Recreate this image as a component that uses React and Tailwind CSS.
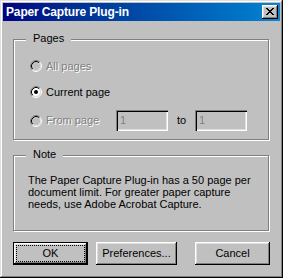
import React from "react";

const raised =
  "shadow-[inset_-1px_-1px_0_#000,inset_1px_1px_0_#fff,inset_-2px_-2px_0_#808080,inset_2px_2px_0_#dfdfdf]";
const sunken =
  "shadow-[inset_1px_1px_0_#808080,inset_2px_2px_0_#000,inset_-1px_-1px_0_#fff,inset_-2px_-2px_0_#dfdfdf]";
const etched = "border border-[#808080] shadow-[1px_1px_0_#fff,inset_1px_1px_0_#fff]";
const disabledText = "text-[#808080] [text-shadow:1px_1px_0_#fff]";

function Radio({ checked, disabled }) {
  return (
    <svg width="12" height="12" viewBox="0 0 12 12" className="shrink-0">
      <circle cx="6" cy="6" r="4.2" fill={disabled ? "#c0c0c0" : "#fff"} />
      <path d="M2.11 9.89 A5.5 5.5 0 0 1 9.89 2.11" fill="none" stroke="#808080" />
      <path d="M9.89 2.11 A5.5 5.5 0 0 1 2.11 9.89" fill="none" stroke="#fff" />
      <path d="M2.82 9.18 A4.5 4.5 0 0 1 9.18 2.82" fill="none" stroke="#000" />
      <path d="M9.18 2.82 A4.5 4.5 0 0 1 2.82 9.18" fill="none" stroke="#dfdfdf" />
      {checked && <circle cx="6" cy="6" r="2" fill="#000" />}
    </svg>
  );
}

function CloseGlyph() {
  // classic 8x7 pixel X
  const rows = ["XX....XX", ".XX..XX.", "..XXXX..", "...XX...", "..XXXX..", ".XX..XX.", "XX....XX"];
  return (
    <svg width="8" height="7" viewBox="0 0 8 7" shapeRendering="crispEdges">
      {rows.map((r, y) =>
        r.split("").map((c, x) =>
          c === "X" ? <rect key={`${x}-${y}`} x={x} y={y} width="1" height="1" fill="#000" /> : null
        )
      )}
    </svg>
  );
}

function GroupBox({ label, className, children }) {
  return (
    <div className={`relative w-[256px] ${etched} ${className}`}>
      <span className="absolute left-[12px] top-[-8px] bg-[#c0c0c0] px-[7px] leading-[13px]">
        {label}
      </span>
      {children}
    </div>
  );
}

function Button({ children, isDefault, width }) {
  return (
    <button
      className={`flex h-[23px] ${width} items-stretch bg-[#c0c0c0] text-[11px] text-black ${
        isDefault ? "border border-black p-[2px]" : "p-[3px]"
      } ${raised}`}
    >
      <span
        className={`flex flex-1 items-center justify-center leading-[13px] ${
          isDefault ? "border border-dotted border-black" : ""
        }`}
      >
        {children}
      </span>
    </button>
  );
}

export default function App() {
  return (
    <div
      className={`flex h-[278px] w-[283px] flex-col bg-[#c0c0c0] p-[3px] font-['Liberation_Sans',Arial,sans-serif] text-[11px] text-black shadow-[inset_-1px_-1px_0_#000,inset_1px_1px_0_#dfdfdf,inset_-2px_-2px_0_#808080,inset_2px_2px_0_#fff]`}
    >
      {/* title bar */}
      <div className="flex h-[18px] items-center bg-linear-to-r from-[#000080] to-[#1084d0] pl-[3px] pr-[2px]">
        <span className="flex-1 text-[12px] font-bold leading-[18px] tracking-[-0.15px] text-white">
          Paper Capture Plug-in
        </span>
        <div className={`flex h-[14px] w-[16px] items-center justify-center bg-[#c0c0c0] pb-[1px] ${raised}`}>
          <CloseGlyph />
        </div>
      </div>

      <div className="flex flex-col pl-[10px] pt-[18px]">
        <GroupBox label="Pages" className="h-[101px]">
          <div className="flex flex-col pl-[16px] pt-[20px]">
            <div className="flex h-[12px] items-center gap-[4px]">
              <Radio disabled />
              <span className={`leading-[13px] ${disabledText}`}>All pages</span>
            </div>
            <div className="mt-[14px] flex h-[12px] items-center gap-[4px]">
              <Radio checked />
              <span className="leading-[13px]">Current page</span>
            </div>
            <div className="mt-[12px] flex h-[21px] items-center">
              <Radio disabled />
              <span className={`ml-[4px] w-[70px] leading-[13px] ${disabledText}`}>From page</span>
              <div className={`flex h-[21px] w-[52px] items-center pl-[4px] ${sunken} text-[#808080]`}>1</div>
              <span className="w-[27px] text-center leading-[13px]">to</span>
              <div className={`flex h-[21px] w-[52px] items-center pl-[4px] ${sunken} text-[#808080]`}>1</div>
            </div>
          </div>
        </GroupBox>

        <GroupBox label="Note" className="mt-[15px] h-[76px]">
          <p className="pl-[14px] pt-[18px] leading-[12px]">
            The Paper Capture Plug-in has a 50 page per
            <br />
            document limit. For greater paper capture
            <br />
            needs, use Adobe Acrobat Capture.
          </p>
        </GroupBox>

        <div className="mt-[11px] flex">
          <Button isDefault width="w-[75px]">OK</Button>
          <div className="ml-[8px]">
            <Button width="w-[81px]">Preferences...</Button>
          </div>
          <div className="ml-[18px]">
            <Button width="w-[75px]">Cancel</Button>
          </div>
        </div>
      </div>
    </div>
  );
}
